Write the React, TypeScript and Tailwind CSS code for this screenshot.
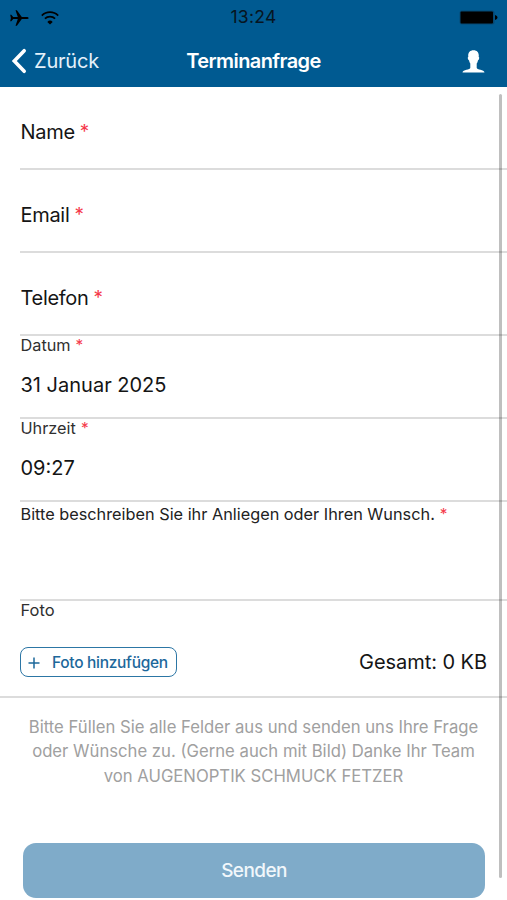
import React from "react";

const PlaneIcon = () => (
  <svg className="h-[18px] w-5" viewBox="0 0 20 18" fill="black">
    <path d="M19.700 9c0-.7-1-1.100-2.200-1.100h-4.700L7.900 1.200H6.500l2.300 6.700H4.200L2.300 5.700H1.200L1.900 9l-.7 3.300h1.100l1.900-2.200h4.600l-2.300 6.700h1.400l4.900-6.700h4.700c1.200 0 2.200-.4 2.200-1.100z" />
  </svg>
);

const WifiIcon = () => (
  <svg
    className="h-[14px] w-[18px]"
    viewBox="0 0 18 14"
    fill="none"
    stroke="black"
    strokeWidth="1.700"
  >
    <path d="M.8 4.600a11.600 11.600 0 0116.400 0" />
    <path d="M3.900 7.700a7.200 7.200 0 0110.200 0" />
    <path
      d="M9 13.600L6.300 10.900a3.800 3.800 0 015.400 0z"
      fill="black"
      stroke="none"
    />
  </svg>
);

const BatteryIcon = () => (
  <svg className="h-[15px] w-[39px]" viewBox="0 0 39 15">
    <rect x=".5" y=".5" width="35" height="14" rx="2.500" fill="#064872" />
    <rect x="1.500" y="1.500" width="32.500" height="12" rx="1" fill="black" />
    <path d="M36 5c1.500.4 2.500 1.300 2.500 2.500S37.500 9.600 36 10z" fill="black" />
  </svg>
);

const BackIcon = () => (
  <svg
    className="h-[26px] w-4"
    viewBox="0 0 16 26"
    fill="none"
    stroke="white"
    strokeWidth="3.600"
    strokeLinecap="round"
    strokeLinejoin="miter"
  >
    <path d="M13.200 2.700L3.300 13l9.900 10.300" />
  </svg>
);

const UserIcon = () => (
  <svg className="h-[23px] w-[23px]" viewBox="0 0 23 23" fill="white">
    <path d="M11.500.3c3.500 0 5.300 2.200 5.300 5.300 0 .5-.1 1.200-.1 1.500.7.200.6 1.300.2 2.100-.2.600-.5.900-.9 1-.3 1.500-.7 2.500-1.300 3.300v4.200c0 2.300 7.600 1.600 7.800 4.800H.5c.2-3.200 7.800-2.500 7.800-4.800v-4.200c-.6-.8-1-1.800-1.300-3.300-.4-.1-.7-.4-.9-1-.4-.8-.5-1.900.2-2.100 0-.3-.1-1-.1-1.500C6.200 2.500 8 .3 11.500.3z" />
  </svg>
);

const Required = () => (
  <span className="ml-[5px] text-[0.94em] text-[#f5384a]">*</span>
);

const emptyFields = ["Name", "Email", "Telefon"];

const filledFields = [
  { label: "Datum", value: "31 Januar 2025" },
  { label: "Uhrzeit", value: "09:27" },
];

const App = () => {
  return (
    <div className="relative h-[900px] w-[507px] overflow-hidden bg-white font-['Inter',sans-serif] text-[#151515]">
      {/* Header */}
      <header className="h-[87px] bg-[#005a91]">
        <div className="grid h-[35px] grid-cols-3 items-center px-[9px]">
          <div className="flex items-center gap-3">
            <PlaneIcon />
            <WifiIcon />
          </div>
          <span className="text-center text-[17.5px] tracking-[0.3px] text-[#071521]">
            13:24
          </span>
          <div className="flex justify-end">
            <BatteryIcon />
          </div>
        </div>
        <div className="grid h-[52px] grid-cols-3 items-center px-[11px]">
          <button className="flex items-center gap-[7px] text-[20px] tracking-[-0.2px] text-[#e4f1fa]">
            <BackIcon />
            Zurück
          </button>
          <h1 className="text-center text-[20px] font-semibold tracking-[-0.6px] text-white">
            Terminanfrage
          </h1>
          <div className="flex justify-end pr-[11px]">
            <UserIcon />
          </div>
        </div>
      </header>

      {/* Form */}
      <form>
        <div className="pl-5">
          {emptyFields.map((field) => (
            <div
              key={field}
              className="flex h-[83px] items-center border-b-2 border-[#dcdcdc] pt-[9px] pl-[0.5px] text-[20px] tracking-[-0.3px]"
            >
              {field}
              <Required />
            </div>
          ))}

          {filledFields.map((field) => (
            <div
              key={field.label}
              className="h-[83px] border-b-2 border-[#dcdcdc] pl-[0.5px]"
            >
              <div className="text-[16.3px] leading-[19px] text-[#303030]">
                {field.label}
                <Required />
              </div>
              <div className="mt-[16px] text-[20px] leading-[28px]">
                {field.value}
              </div>
            </div>
          ))}

          <div className="h-[99px] border-b-2 border-[#dcdcdc] pt-px pl-[0.5px] text-[16.3px] leading-[22px] text-[#222]">
            Bitte beschreiben Sie ihr Anliegen oder Ihren Wunsch.
            <Required />
          </div>
        </div>

        <div className="h-[97px] border-b-2 border-[#dcdcdc] pr-5 pl-5">
          <div className="pl-[0.5px] text-[16.5px] leading-[18px] text-[#303030]">
            Foto
          </div>
          <div className="mt-7 flex h-[30px] items-center justify-between">
            <button
              type="button"
              className="flex h-[30px] w-[157px] items-center rounded-[8px] border-[1.5px] border-[#2c76a5] pt-px pl-[7px] text-[15.5px] font-medium tracking-[-0.3px] text-[#1d689b]"
            >
              <svg
                className="mr-[12px] h-3 w-3"
                viewBox="0 0 12 12"
                stroke="currentColor"
                strokeWidth="1.500"
              >
                <path d="M6 .5v11M.5 6h11" />
              </svg>
              Foto hinzufügen
            </button>
            <span className="text-[20px] tracking-[-0.05px]">Gesamt: 0 KB</span>
          </div>
        </div>

        <p className="pt-[17px] text-center text-[16.7px] leading-[24.4px] text-[#a0a0a0]">
          Bitte Füllen Sie alle Felder aus und senden uns Ihre Frage
          <br />
          oder Wünsche zu. (Gerne auch mit Bild) Danke Ihr Team
          <br />
          von AUGENOPTIK SCHMUCK FETZER
        </p>

        <button
          type="button"
          className="mt-[54.8px] ml-[23px] h-[55px] w-[462px] rounded-[13px] bg-[#7fabc9] pt-px text-[19px] font-medium tracking-[-0.6px] text-[#f1f7fb]"
        >
          Senden
        </button>
      </form>

      {/* Scroll indicator */}
      <div className="absolute top-[94px] right-[5px] h-[784px] w-[3px] rounded-full bg-black/25" />
    </div>
  );
};

export default App;
